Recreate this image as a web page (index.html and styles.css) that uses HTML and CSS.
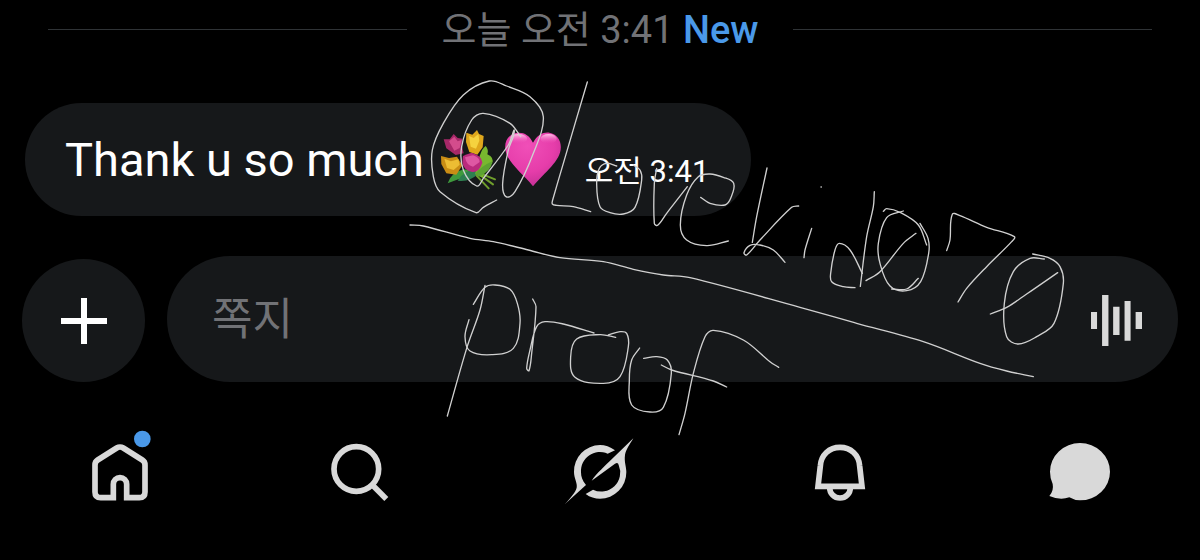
FILE: index.html
```
<!DOCTYPE html>
<html lang="ko">
<head>
    <meta charset="utf-8">
    <meta name="viewport" content="width=device-width, initial-scale=1">
    <title>쪽지</title>
    <link rel="stylesheet" href="styles.css">
</head>
<body>
    <main class="chat">
        <div class="divider">
            <p>오늘 오전 3:41 <span class="new">New</span></p>
        </div>

        <div class="bubble">
            <p class="message">Thank u so much</p>
            <svg class="emoji bouquet" viewBox="0 0 168 180" role="img" aria-label="bouquet">
                <g stroke="#6f9e2c" stroke-width="6" stroke-linecap="round">
                    <path d="M92 120l70 28M90 115l66 48M95 125l48 50"/>
                </g>
                <path fill="#3f9a3d" d="M20 160q12-35 50-42l32 6q-20 26-50 24l-32 12z"/>
                <path fill="#2e7f50" d="M50 152q20-32 54-34 12 18-14 28-20 10-40 6z"/>
                <path fill="#78b82f" d="M102 132q12-30 14-54 8-24 18-30 10 12 5 25 22 10 14 28-20 10-28 42z"/>
                <path fill="#5da331" d="M102 132q20-24 52-38-3 30-40 46z"/>
                <path fill="#a62868" d="M8 28l18 0 12-16 12 12 14 2-2 20 6 24-24 5-28-20z"/>
                <path fill="#d34c8c" d="M24 34l16-14 10 14 12-4-6 24-16 8z"/>
                <path fill="#dfa71c" d="M76 8l18 6 14-14 6 12 14 6-3 34-16 22-24-8-10-30z"/>
                <path fill="#f5d23f" d="M84 18l14 6 14-12 3 20-10 24-16-6z"/>
                <path fill="#c98d15" d="M0 78l24 6 24-4 16 26-18 28-30-4-15-28z"/>
                <path fill="#edbd33" d="M10 86l20 8 22-6 4 16-18 16-20-6z"/>
                <path fill="#ba2b7d" d="M66 78q12-6 26-10 30 8 32 30-10 30-30 28-28-6-30-30z"/>
                <path fill="#de58a3" d="M72 82l24-6q20 6 20 20l-20 14q-20-4-24-28z"/>
            </svg>
            <svg class="emoji" viewBox="0 0 164 162" role="img" aria-label="pink heart">
                <defs>
                    <radialGradient id="heart-fill" cx="40%" cy="25%" r="80%">
                        <stop offset="0" stop-color="#f04fb8"/>
                        <stop offset="0.6" stop-color="#e63daa"/>
                        <stop offset="1" stop-color="#c22f94"/>
                    </radialGradient>
                    <linearGradient id="heart-shine" x1="0" y1="0" x2="0" y2="1">
                        <stop offset="0" stop-color="#ffc4e8"/>
                        <stop offset="1" stop-color="#f04fb8" stop-opacity="0"/>
                    </linearGradient>
                </defs>
                <path fill="url(#heart-fill)" d="M82 32C95 8 112 0 130 2c22 3 34 22 34 42 0 42-48 74-82 116C48 118 0 86 0 44 0 22 14 4 38 2c18-1 34 8 44 30z"/>
                <ellipse fill="url(#heart-shine)" cx="39" cy="20" rx="26" ry="14"/>
                <ellipse fill="url(#heart-shine)" cx="128" cy="20" rx="24" ry="14"/>
            </svg>
            <time class="time">오전 3:41</time>
        </div>

        <form class="composer">
            <button type="button" class="add" aria-label="추가">
                <svg viewBox="0 0 46 46"><path d="M23 0v46M0 23h46" stroke="currentColor" stroke-width="6"/></svg>
            </button>
            <div class="field">
                <input type="text" placeholder="쪽지" aria-label="쪽지">
                <button type="button" class="voice" aria-label="음성">
                    <svg viewBox="0 0 152 152" fill="currentColor">
                        <path d="M0 51h18v50H0zM33 0h19v152H33zM66 35h19v84H66zM100 18h18v118h-18zM133 51h19v50h-19z"/>
                    </svg>
                </button>
            </div>
        </form>

        <nav class="tabs">
            <a href="#home" aria-label="홈">
                <svg viewBox="72 48 216 216">
                    <path class="line" d="M160 233H122Q105 233 105 216V135Q105 125 113 120L170 84Q180 78 190 84L247 120Q255 125 255 135V216Q255 233 238 233H200V193a20 20 0 0 0-40 0z"/>
                    <circle cx="247" cy="57" r="25" fill="#4a99e9"/>
                </svg>
            </a>
            <a href="#search" aria-label="검색">
                <svg viewBox="792 48 216 216">
                    <circle class="line" cx="889" cy="147" r="67"/>
                    <path class="line" d="M935 193L979 237"/>
                </svg>
            </a>
            <a href="#grok" aria-label="Grok">
                <svg viewBox="72 48 216 216" fill="currentColor">
                    <path d="M225 91C210 80 195 75 180 75A79 79 0 0 0 102 156C102 175 113 190 110 203C108 215 90 235 75 252L138 195C127 182 123 170 123 157A57 57 0 0 1 203 101z"/>
                    <path d="M280 55L215 118C195 138 170 160 155 182L225 131Q234 125 236 135A57 57 0 0 1 159 209L137 222C150 232 165 236 180 236A79 79 0 0 0 259 156C259 140 252 125 255 105C257 90 270 72 280 55z"/>
                </svg>
            </a>
            <a href="#notifications" aria-label="알림">
                <svg viewBox="792 48 216 216">
                    <path class="line" d="M834 199L841 138C843 105 868 82 900 82C932 82 957 105 959 138L966 199z"/>
                    <path class="line" d="M869 203A31 31 0 0 0 931 203"/>
                </svg>
            </a>
            <a href="#messages" aria-label="쪽지">
                <svg viewBox="72 468 216 216" fill="currentColor">
                    <path d="M180 489A90 86 0 1 1 180 661Q163 661 148 652Q120 662 88 648Q102 632 98 612Q90 595 90 575A90 86 0 0 1 180 489z"/>
                </svg>
            </a>
        </nav>

        <svg class="ink" id="ink" viewBox="0 0 3600 1680" role="img" aria-label="@Lovekid070 proof"></svg>
    </main>
    <script src="script.js"></script>
</body>
</html>
```
FILE: styles.css
```
:root {
    --surface: #16181a;
    --icon: #d9d9d9;
    --muted: #717276;
    --blue: #4a99e9;
}

* {
    box-sizing: border-box;
}

body {
    margin: 0;
    background: #000;
    color: #fff;
    font-family: Roboto, "Noto Sans CJK KR", sans-serif;
}

p {
    margin: 0;
}

button {
    border: none;
    padding: 0;
    cursor: pointer;
}

svg {
    display: block;
}

.chat {
    position: relative;
    overflow: hidden;
}

.divider {
    display: flex;
    align-items: center;
    gap: 35px;
    height: 59px;
    padding: 0 48px;
    color: var(--muted);
    font-size: 38px;
    line-height: 56px;
    white-space: nowrap;
}

.divider::before,
.divider::after {
    content: "";
    flex: 1;
    height: 1px;
    background: #2f3336;
}

.new {
    color: var(--blue);
    font-weight: 500;
}

.bubble {
    display: flex;
    align-items: center;
    width: fit-content;
    height: 113px;
    margin: 44px 25px 40px;
    padding: 0 42px 0 40px;
    border-radius: 57px;
    background: var(--surface);
}

.message {
    font-size: 47px;
    line-height: 56px;
}

.emoji {
    width: 56px;
    height: 55px;
}

.bouquet {
    height: 60px;
    margin: 0 8px 0 17px;
}

.time {
    margin: 24px 0 0 24px;
    font-size: 31px;
    line-height: 40px;
}

.composer {
    display: flex;
    align-items: flex-end;
    gap: 22px;
    padding: 0 22px;
}

.add {
    display: grid;
    place-items: center;
    width: 123px;
    height: 123px;
    border-radius: 50%;
    background: var(--surface);
    color: #fff;
}

.add svg {
    width: 46px;
    height: 46px;
}

.field {
    display: flex;
    flex: 1;
    align-items: center;
    height: 126px;
    padding: 2px 36px 0 45px;
    border-radius: 63px;
    background: var(--surface);
}

.field input {
    flex: 1;
    min-width: 0;
    padding: 0;
    border: none;
    outline: none;
    background: none;
    color: #fff;
    font: inherit;
    font-size: 44px;
}

.field input::placeholder {
    color: var(--muted);
}

.voice {
    background: none;
    color: var(--icon);
}

.voice svg {
    width: 51px;
    height: 51px;
}

.tabs {
    display: grid;
    grid-template-columns: repeat(5, 1fr);
    padding: 54px 0 52px;
}

.tabs a {
    display: grid;
    place-items: center;
    color: var(--icon);
}

.tabs svg {
    width: 72px;
    height: 72px;
    overflow: visible;
}

.line {
    fill: none;
    stroke: currentColor;
    stroke-width: 17;
}

/* handwriting over the chat */
.ink {
    position: absolute;
    top: 0;
    left: 0;
    width: 100%;
    pointer-events: none;
    fill: none;
    stroke: #d0d0d0;
    stroke-width: 4;
    stroke-linecap: round;
    stroke-linejoin: round;
}
```
FILE: script.js
```
// each group: origin, then pen strokes as x,y points
const ink = [
    { at: [1200, 210], strokes: [
        '362,200 330,160 250,130 215,150 185,230 190,300 230,348 250,325 325,225 343,183 325,240 308,340 318,380 345,365 400,250 430,140 390,80 320,48 268,33 190,75 130,160 97,240 100,320 120,365 228,428 250,412 290,390',
        '562,36 458,390 457,402 470,406 520,410 572,425'
    ] },
    { at: [0, 0], strokes: [
        '1230,675 1270,678 1410,715 1480,725 1585,750 1680,773 1810,785 1900,808 1990,825 2070,833 2400,922 2570,970 2770,1025 2940,1090 3020,1113 3100,1130'
    ] },
    { at: [1680, 210], strokes: [
        '170,288 140,280 118,295 110,340 120,410 150,428 190,432 225,412 245,330 240,300 220,285',
        '290,295 283,340 283,460 293,466 320,430 382,350',
        '422,382 450,400 495,405 512,385 521,340 490,322 450,312 415,320 380,375 361,465 380,510 440,527 505,513',
        '621,294 590,440 577,517',
        '716,408 695,412 600,510 560,555 552,548 570,526 600,525 640,540 675,577',
        '755,475 735,540 732,563'
    ] },
    { at: [2400, 510], strokes: [
        '63,51 64,51',
        '165,353 130,350 95,335 92,310 105,240 118,220 150,240 187,310',
        '223,65 220,110 200,200 181,349',
        '310,123 260,143 235,220 240,280 270,348 320,362 362,335 386,250 384,205 360,160',
        '250,124 260,116 300,127 355,165 380,225',
        '275,357 320,357 355,325',
        '198,332 240,305 310,220 348,190',
        '440,242 450,210 457,133 480,137 560,172 643,200 635,215 560,290 500,355 474,396',
        '733,267 690,265 640,305 613,400 620,500 655,522 710,500 762,460 790,340 780,290 750,265 698,252',
        '571,432 620,412 680,372 773,308'
    ] },
    { at: [1290, 810], strokes: [
        '165,46 150,120 110,235 52,438',
        '130,103 165,52 195,45 240,58 262,100 270,160 250,235 185,254 120,243 105,200 117,149',
        '308,87 318,110 305,250 297,302 290,295 300,240 320,170 345,155 400,162 492,189',
        '557,202 510,194 440,207 422,260 435,322 520,340 570,320 595,230 590,190 570,185 535,195',
        '629,234 605,270 598,330 605,405 660,426 700,412 724,310 712,270 680,260 641,265',
        '1046,292 1020,275 940,210 850,181 825,200 790,310 765,430 747,494',
        '694,285 725,300 850,333 890,351'
    ] }
];

// handles are limited by the segment length so long strokes don't overshoot
function handle(from, prev, next, length) {
    const dx = next[0] - prev[0];
    const dy = next[1] - prev[1];
    const size = Math.hypot(dx, dy) || 1;
    return [from[0] + dx / size * length, from[1] + dy / size * length];
}

function toPath(stroke, at) {
    const pts = stroke.split(' ').map(pair => {
        const [x, y] = pair.split(',').map(Number);
        return [x + at[0], y + at[1]];
    });
    let d = `M${pts[0]}`;
    for (let i = 0; i < pts.length - 1; i++) {
        const a = pts[i];
        const b = pts[i + 1];
        const before = pts[i - 1] || a;
        const after = pts[i + 2] || b;
        const length = Math.hypot(b[0] - a[0], b[1] - a[1]) / 3;
        d += `C${handle(a, before, b, length)} ${handle(b, after, a, length)} ${b}`;
    }
    return d;
}

const svg = document.getElementById('ink');
ink.forEach(group => {
    group.strokes.forEach(stroke => {
        const path = document.createElementNS('http://www.w3.org/2000/svg', 'path');
        path.setAttribute('d', toPath(stroke, group.at));
        svg.appendChild(path);
    });
});
```
